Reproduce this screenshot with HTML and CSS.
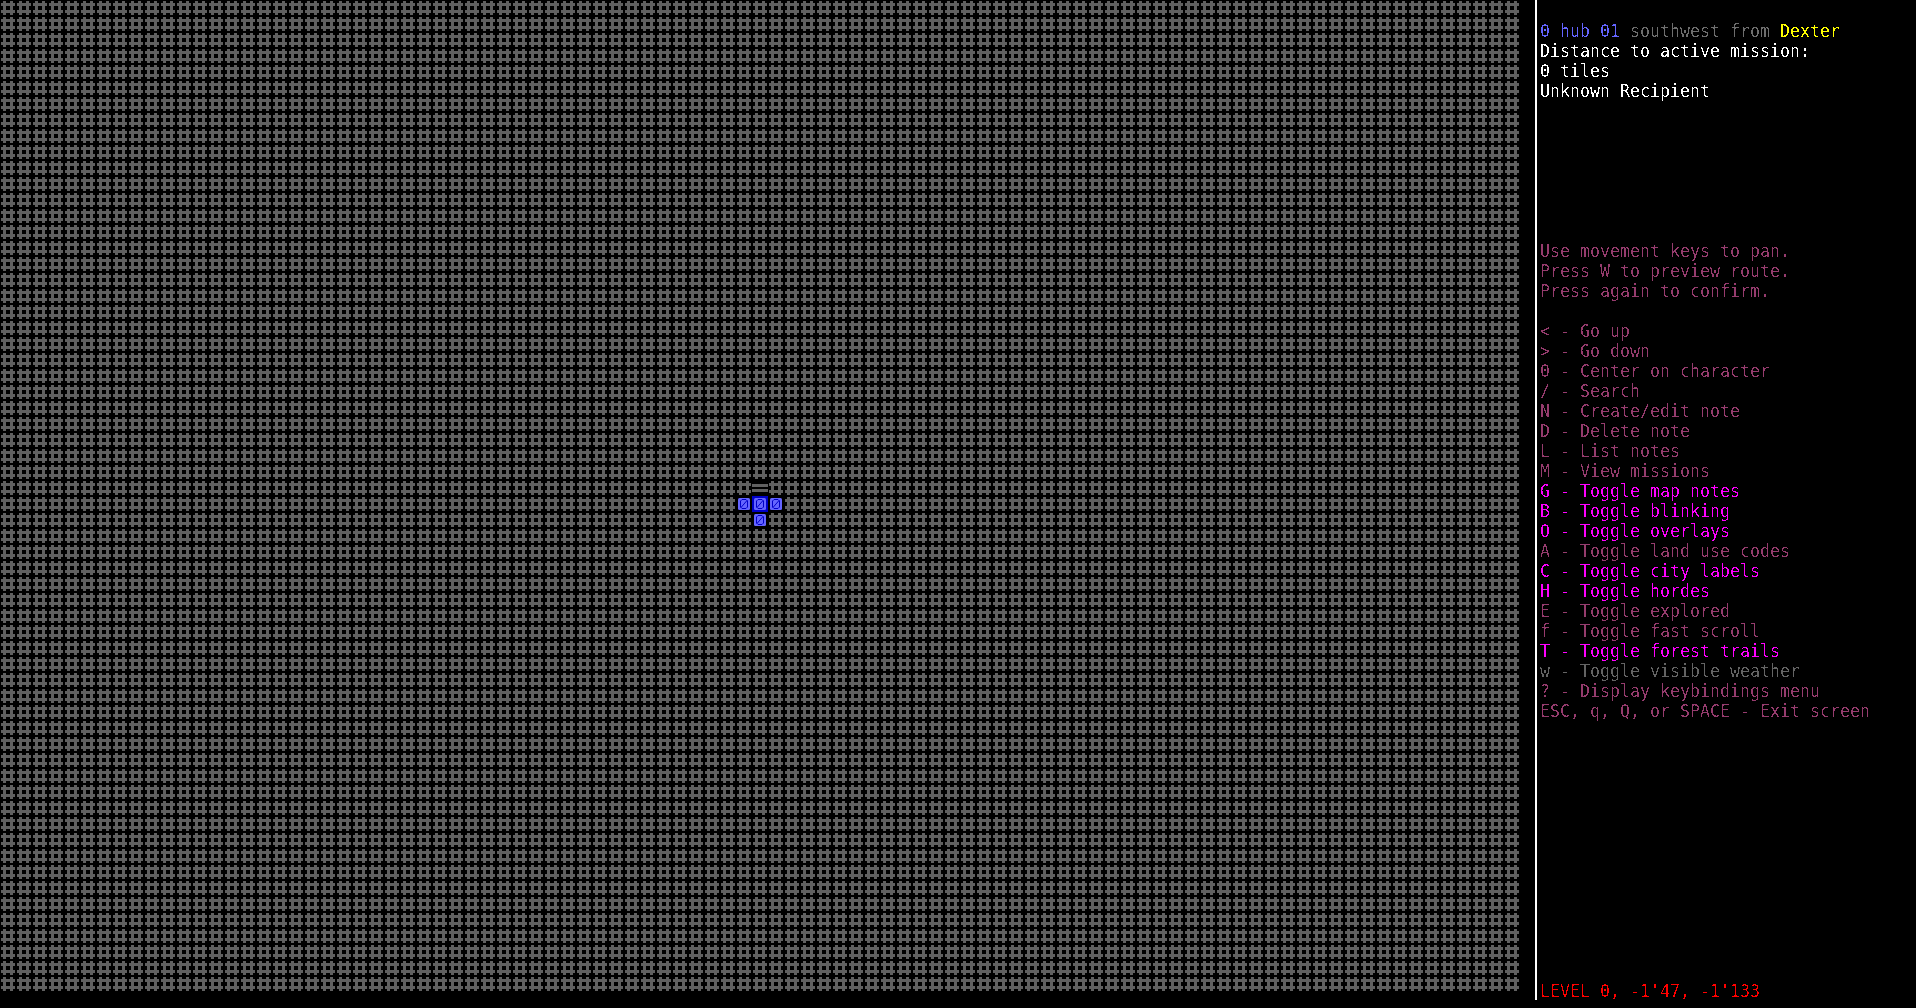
FILE: index.html
```html
<!DOCTYPE html>
<html lang="en">
<head>
<meta charset="utf-8">
<title>Overmap</title>
<link rel="stylesheet" href="styles.css">
</head>
<body>
<svg class="defs" width="0" height="0" aria-hidden="true">
  <filter id="crisp" x="0" y="0" width="100%" height="100%" color-interpolation-filters="sRGB">
    <feComponentTransfer><feFuncA type="discrete" tableValues="0 0 0 0 0 0 1 1 1 1"/></feComponentTransfer>
  </filter>
</svg>
<main class="screen">
  <svg class="map" width="1520" height="992" viewBox="0 0 1520 992" aria-label="Overmap">
    <defs>
      <pattern id="forest" width="16" height="16" patternUnits="userSpaceOnUse">
        <path class="tile-hash" fill-rule="evenodd" d="M3 1h3v2h4V1h3v2h2v3h-2v4h2v3h-2v2h-3v-2H6v2H3v-2H1v-3h2V6H1V3h2zM6 6v4h4V6z"/>
      </pattern>
      <g id="hub">
        <rect class="hub-face" x="2" y="2" width="12" height="12" rx="1.5"/>
        <path class="hub-ring" d="M6 3.500h4l1.500 1.500v6l-1.500 1.500H6l-1.500-1.500V5zM11 4.500L5 11.500"/>
      </g>
    </defs>
    <rect width="1520" height="992" fill="url(#forest)"/>
    <rect x="752" y="480" width="16" height="16" class="tile-clear"/>
    <rect x="736" y="496" width="48" height="16" class="tile-clear"/>
    <rect x="752" y="512" width="16" height="16" class="tile-clear"/>
    <path class="tile-hash" d="M752 484h16v3h-16zM752 489h16v3h-16z"/>
    <rect x="752" y="496" width="16" height="16" class="cursor"/>
    <use href="#hub" x="736" y="496"/>
    <use href="#hub" x="752" y="496"/>
    <use href="#hub" x="768" y="496"/>
    <use href="#hub" x="752" y="512"/>
  </svg>
  <aside class="panel">
    <div class="text">
      <section class="info">
        <p><span class="blue">0 hub 01</span> <span class="gray">southwest from</span> <span class="yellow">Dexter</span></p>
        <p>Distance to active mission:</p>
        <p>0 tiles</p>
        <p>Unknown Recipient</p>
      </section>
      <section class="help">
        <p>Use movement keys to pan.</p>
        <p>Press W to preview route.</p>
        <p>Press again to confirm.</p>
      </section>
      <section class="keys">
        <p>&lt; - Go up</p>
        <p>&gt; - Go down</p>
        <p>0 - Center on character</p>
        <p>/ - Search</p>
        <p>N - Create/edit note</p>
        <p>D - Delete note</p>
        <p>L - List notes</p>
        <p>M - View missions</p>
        <p class="on">G - Toggle map notes</p>
        <p class="on">B - Toggle blinking</p>
        <p class="on">O - Toggle overlays</p>
        <p>A - Toggle land use codes</p>
        <p class="on">C - Toggle city labels</p>
        <p class="on">H - Toggle hordes</p>
        <p>E - Toggle explored</p>
        <p>f - Toggle fast scroll</p>
        <p class="on">T - Toggle forest trails</p>
        <p class="off">w - Toggle visible weather</p>
        <p>? - Display keybindings menu</p>
        <p>ESC, q, Q, or SPACE - Exit screen</p>
      </section>
      <p class="status">LEVEL 0, -1'47, -1'133</p>
    </div>
  </aside>
</main>
</body>
</html>
```
FILE: styles.css
```css
* { box-sizing: border-box; }
html, body { margin: 0; height: 100%; background: #000; overflow: hidden; }
.defs { position: absolute; }
.screen { display: flex; height: 1000px; }
.map { flex: none; display: block; margin-right: 15px; }
.tile-hash { fill: #606060; }
.tile-clear { fill: #000; }
.cursor { fill: #0000c8; }
.hub-face { fill: #6464ff; }
.hub-ring { fill: none; stroke: #0000c8; stroke-width: 1; }
.panel { flex: none; width: 381px; height: 1000px; border-left: 2px solid #fff; padding-left: 3px; overflow: hidden; }
.text {
  display: flex; flex-direction: column; width: 410px; height: 1000px;
  padding-top: 20px;
  font: 18px/22px "DejaVu Sans Mono", monospace;
  color: #fff;
  transform: scaleX(.9225); transform-origin: 0 0;
  filter: url(#crisp);
}
.text p { margin: 0; height: 20px; white-space: pre; }
.blue { color: #6464ff; }
.gray { color: #6e6e6e; }
.yellow { color: #ffff00; }
.help { margin-top: 140px; color: #963c6e; }
.keys { margin-top: 20px; color: #963c6e; }
.keys .on { color: #ff00ff; }
.keys .off { color: #646464; }
.text .status { margin-top: auto; color: #ff0000; }
```
